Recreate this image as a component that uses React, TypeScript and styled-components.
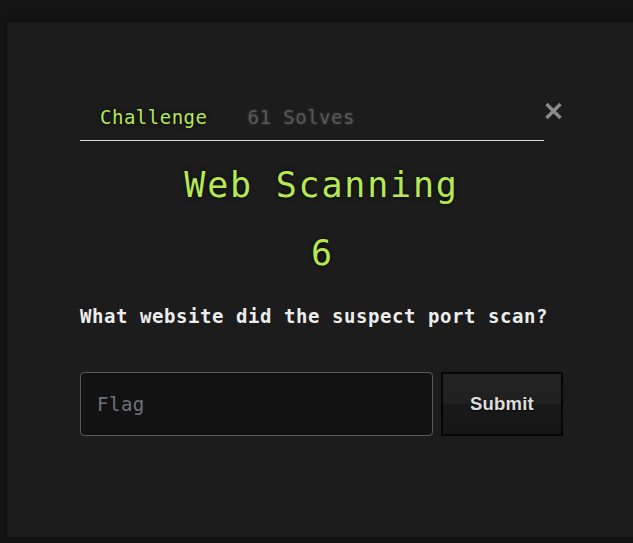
import * as React from 'react';
import styled, { createGlobalStyle } from 'styled-components';

const GlobalStyle = createGlobalStyle`
  html, body {
    margin: 0;
    padding: 0;
    background: #141414;
    overflow: hidden;
  }
  body {
    font-family: 'DejaVu Sans Mono', monospace;
  }
`;

const Page = styled.div`
  width: 633px;
  height: 543px;
  padding: 23px 0 0 8px;
  box-sizing: border-box;
  overflow: hidden;
`;

const Modal = styled.div`
  width: 700px;
  height: 513px;
  box-sizing: border-box;
  padding: 71px 0 0 72px;
  background: #1c1c1c;
  box-shadow: 0 0 0 1px #171717, 0 0 6px rgba(0, 0, 0, 0.7);
`;

const Body = styled.div`
  width: 483px;
  display: flex;
  flex-direction: column;
`;

const Header = styled.div`
  display: flex;
  align-items: flex-start;
  justify-content: space-between;
`;

const Tabs = styled.ul`
  display: flex;
  list-style: none;
  margin: 0;
  padding: 0;
  width: 464px;
  border-bottom: 1px solid #dcdcdc;
`;

const Tab = styled.li<{ $active?: boolean }>`
  padding: 12px 20px;
  font-size: 19px;
  line-height: 22px;
  letter-spacing: 0.5px;
  color: ${p => (p.$active ? '#b5e853' : '#575757')};
  text-shadow: ${p => (p.$active ? '0 0 4px rgba(0,0,0,0.9)' : '0 0 3px rgba(90,90,90,0.6)')};
`;

const Close = styled.button`
  margin-top: 8px;
  padding: 0;
  width: 19px;
  height: 18px;
  border: none;
  background: none;
  display: flex;
  align-items: center;
  justify-content: center;
`;

const Title = styled.h2`
  margin: 24px 0 0;
  text-align: center;
  font-size: 35px;
  line-height: 41px;
  font-weight: normal;
  letter-spacing: 1.8px;
  color: #b5e853;
  text-shadow: 0 0 4px rgba(0, 0, 0, 0.8);
`;

const Value = styled(Title)`
  margin-top: 27px;
  letter-spacing: 0;
`;

const Question = styled.p`
  margin: 31px 0 0;
  font-size: 19px;
  line-height: 22px;
  font-weight: bold;
  letter-spacing: 0.56px;
  color: #ececec;
`;

const SubmitRow = styled.form`
  display: flex;
  gap: 8px;
  margin-top: 45px;
`;

const FlagInput = styled.input`
  width: 353px;
  height: 64px;
  box-sizing: border-box;
  padding: 0 16px;
  background: #121212;
  border: 1px solid #5a5a5a;
  border-radius: 4px;
  font-family: 'DejaVu Sans Mono', monospace;
  font-size: 19px;
  letter-spacing: 0.5px;
  color: #ddd;
  outline: none;
  &::placeholder {
    color: #6c737a;
  }
`;

const SubmitButton = styled.button`
  width: 122px;
  height: 64px;
  box-sizing: border-box;
  border: 2px solid #060606;
  background: linear-gradient(#222222 0%, #202020 50%, #191919 50%, #161616 100%);
  color: #dcdcdc;
  font-family: 'Liberation Sans', Arial, sans-serif;
  font-weight: bold;
  font-size: 18.5px;
  letter-spacing: 0.2px;
  text-shadow: 0 1px 2px rgba(0, 0, 0, 0.8);
`;

export default function App() {
  return (
    <>
      <GlobalStyle />
      <Page>
        <Modal>
          <Body>
            <Header>
              <Tabs>
                <Tab $active>Challenge</Tab>
                <Tab>61 Solves</Tab>
              </Tabs>
              <Close aria-label="Close">
                <svg width="19" height="18" viewBox="0 0 19 18">
                  <path d="M2.5 2 L16.5 16 M16.5 2 L2.5 16" stroke="#8a8a8a" strokeWidth="3.4" strokeLinecap="butt" />
                </svg>
              </Close>
            </Header>
            <Title>Web Scanning</Title>
            <Value>6</Value>
            <Question>What website did the suspect port scan?</Question>
            <SubmitRow onSubmit={e => e.preventDefault()}>
              <FlagInput placeholder="Flag" />
              <SubmitButton type="submit">Submit</SubmitButton>
            </SubmitRow>
          </Body>
        </Modal>
      </Page>
    </>
  );
}
